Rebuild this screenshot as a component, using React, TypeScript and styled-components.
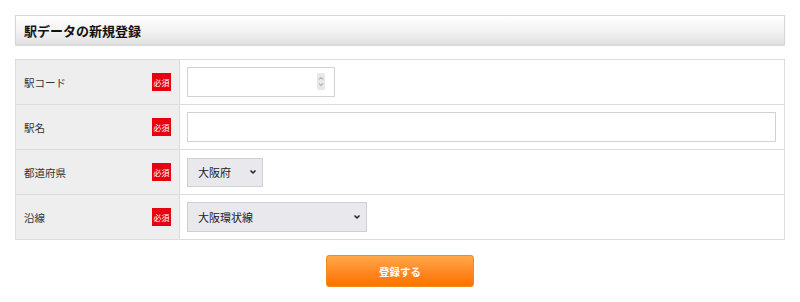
import React from "react";
import styled, { createGlobalStyle } from "styled-components";

const Global = createGlobalStyle`
  html, body { margin: 0; padding: 0; background: #fff; }
  body { font-family: "Noto Sans CJK JP", "Noto Sans", sans-serif; color: #333; }
  * { box-sizing: border-box; }
`;

const Page = styled.div`
  padding: 15px 15px 0 15px;
  width: 800px;
`;

const TitleBar = styled.h2`
  margin: 0 0 14px 0;
  height: 30px;
  display: flex;
  align-items: center;
  padding: 0 8px;
  font-size: 13px;
  font-weight: 700;
  color: #111;
  border: 1px solid #d6d6d6;
  background: linear-gradient(to bottom, #ffffff 0%, #f3f3f3 50%, #e2e2e2 100%);
  box-shadow: 0 1px 1px rgba(0, 0, 0, 0.12);
`;

const Table = styled.table`
  width: 100%;
  border-collapse: collapse;
  border: 1px solid #dcdcdc;
`;

const Row = styled.tr`
  height: 45px;
`;

const LabelCell = styled.th`
  width: 164px;
  background: #eeeeee;
  border: 1px solid #dcdcdc;
  padding: 0 8px;
  font-weight: 400;
  text-align: left;
  font-size: 10.5px;
  color: #333;
`;

const LabelInner = styled.div`
  display: flex;
  align-items: center;
  justify-content: space-between;
`;

const Badge = styled.span`
  display: inline-flex;
  align-items: center;
  justify-content: center;
  width: 19px;
  height: 18px;
  background: #e60012;
  color: #fff;
  font-size: 8px;
  font-family: "Noto Sans CJK JP", sans-serif;
`;

const ValueCell = styled.td`
  border: 1px solid #dcdcdc;
  padding: 0 8px 0 7px;
  background: #fff;
`;

const FieldWrap = styled.div<{ $width?: string }>`
  position: relative;
  width: ${(p) => p.$width ?? "100%"};
`;

const TextInput = styled.input`
  display: block;
  width: 100%;
  height: 30px;
  border: 1px solid #d2d2d2;
  padding: 0 22px 0 10px;
  font-size: 11px;
  font-family: inherit;
  background: #fff;
  outline: none;
  -moz-appearance: textfield;
  &::-webkit-inner-spin-button,
  &::-webkit-outer-spin-button {
    -webkit-appearance: none;
    margin: 0;
  }
`;

const Spinner = styled.svg`
  position: absolute;
  right: 10px;
  top: 6px;
  width: 8px;
  height: 17px;
  pointer-events: none;
`;

const SelectWrap = styled.div<{ $width: number; $height: number }>`
  position: relative;
  width: ${(p) => p.$width}px;
  height: ${(p) => p.$height}px;
`;

const Select = styled.select`
  appearance: none;
  width: 100%;
  height: 100%;
  border: 1px solid #d0d0d4;
  background: #e9e9ed;
  padding: 0 22px 0 10px;
  font-size: 11px;
  font-family: inherit;
  color: #222;
  outline: none;
`;

const Chevron = styled.svg`
  position: absolute;
  right: 6px;
  top: 50%;
  width: 8px;
  height: 8px;
  margin-top: -4px;
  pointer-events: none;
`;

const Actions = styled.div`
  display: flex;
  justify-content: center;
  padding-top: 15px;
`;

const Submit = styled.button`
  width: 148px;
  height: 32px;
  border: 1px solid #f08a1c;
  border-radius: 3px;
  background: linear-gradient(to bottom, #ffa849 0%, #ff8a26 50%, #ff7000 100%);
  color: #fff;
  font-weight: 700;
  font-size: 10.5px;
  font-family: inherit;
  cursor: pointer;
`;

const ChevronIcon = () => (
  <Chevron viewBox="0 0 8 8">
    <path d="M1.5 2.5 L4 5 L6.5 2.5" fill="none" stroke="#222" strokeWidth="1.5" />
  </Chevron>
);

const SpinnerIcon = () => (
  <Spinner viewBox="0 0 8 17">
    <rect x="0" y="0" width="8" height="17" rx="1.5" fill="#e8e8ec" />
    <path d="M2 6.5 L4 4.5 L6 6.5" fill="none" stroke="#8a8a90" strokeWidth="1" />
    <path d="M2 10.5 L4 12.5 L6 10.5" fill="none" stroke="#8a8a90" strokeWidth="1" />
  </Spinner>
);

export default function App() {
  return (
    <>
      <Global />
      <Page>
        <TitleBar>駅データの新規登録</TitleBar>
        <Table>
          <tbody>
            <Row>
              <LabelCell>
                <LabelInner>
                  駅コード<Badge>必須</Badge>
                </LabelInner>
              </LabelCell>
              <ValueCell>
                <FieldWrap $width="148px">
                  <TextInput type="number" />
                  <SpinnerIcon />
                </FieldWrap>
              </ValueCell>
            </Row>
            <Row>
              <LabelCell>
                <LabelInner>
                  駅名<Badge>必須</Badge>
                </LabelInner>
              </LabelCell>
              <ValueCell>
                <FieldWrap>
                  <TextInput type="text" />
                </FieldWrap>
              </ValueCell>
            </Row>
            <Row>
              <LabelCell>
                <LabelInner>
                  都道府県<Badge>必須</Badge>
                </LabelInner>
              </LabelCell>
              <ValueCell>
                <SelectWrap $width={76} $height={29}>
                  <Select defaultValue="osaka">
                    <option value="osaka">大阪府</option>
                  </Select>
                  <ChevronIcon />
                </SelectWrap>
              </ValueCell>
            </Row>
            <Row>
              <LabelCell>
                <LabelInner>
                  沿線<Badge>必須</Badge>
                </LabelInner>
              </LabelCell>
              <ValueCell>
                <SelectWrap $width={180} $height={30}>
                  <Select defaultValue="loop">
                    <option value="loop">大阪環状線</option>
                  </Select>
                  <ChevronIcon />
                </SelectWrap>
              </ValueCell>
            </Row>
          </tbody>
        </Table>
        <Actions>
          <Submit type="button">登録する</Submit>
        </Actions>
      </Page>
    </>
  );
}
